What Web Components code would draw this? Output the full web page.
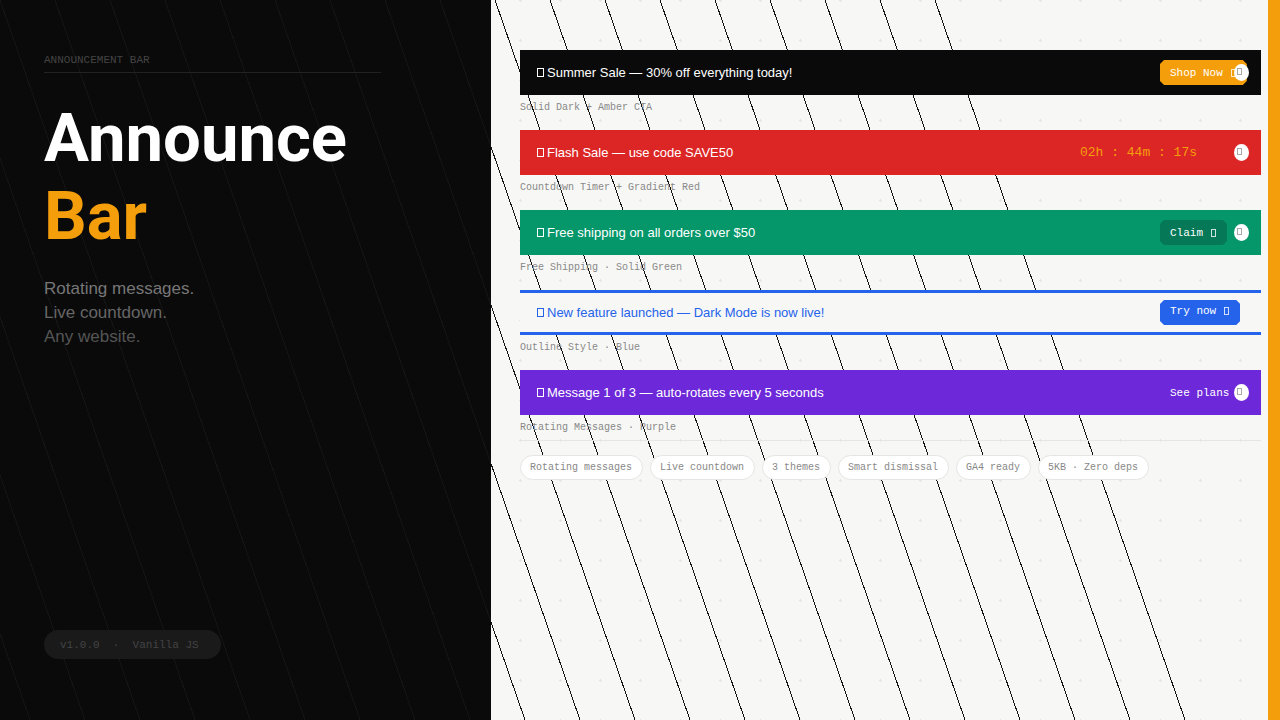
<!DOCTYPE html>
<html lang="en">
<head>
<meta charset="utf-8">
<title>Announce Bar</title>
<style>
  html, body { margin: 0; }
  body { font-family: "Liberation Sans", Arial, sans-serif; background: #f7f7f5; }
</style>
</head>
<body>
<showcase-page>
  <hero-panel slot="hero">
    <span slot="eyebrow">ANNOUNCEMENT BAR</span>
    <span slot="title">Announce</span>
    <span slot="accent">Bar</span>
    <span slot="line-1">Rotating messages.</span>
    <span slot="line-2">Live countdown.</span>
    <span slot="line-3">Any website.</span>
    <span slot="version">v1.0.0&nbsp; ·&nbsp; Vanilla JS</span>
  </hero-panel>
  <demo-panel slot="demos">
    <bar-demo>
      <announce-bar theme="dark" closable>Summer Sale — 30% off everything today!<cta-button slot="action" arrow>Shop Now</cta-button></announce-bar>
      <span slot="caption">Solid Dark + Amber CTA</span>
    </bar-demo>
    <bar-demo>
      <announce-bar theme="red" closable>Flash Sale — use code SAVE50<count-down slot="action">02h : 44m : 17s</count-down></announce-bar>
      <span slot="caption">Countdown Timer + Gradient Red</span>
    </bar-demo>
    <bar-demo>
      <announce-bar theme="green" closable>Free shipping on all orders over $50<cta-button slot="action" arrow>Claim</cta-button></announce-bar>
      <span slot="caption">Free Shipping · Solid Green</span>
    </bar-demo>
    <bar-demo>
      <announce-bar theme="outline">New feature launched — Dark Mode is now live!<cta-button slot="action" arrow>Try now</cta-button></announce-bar>
      <span slot="caption">Outline Style · Blue</span>
    </bar-demo>
    <bar-demo>
      <announce-bar theme="purple" closable>Message 1 of 3 — auto-rotates every 5 seconds<cta-button slot="action">See plans</cta-button></announce-bar>
      <span slot="caption">Rotating Messages · Purple</span>
    </bar-demo>
    <feature-chip slot="features">Rotating messages</feature-chip>
    <feature-chip slot="features">Live countdown</feature-chip>
    <feature-chip slot="features">3 themes</feature-chip>
    <feature-chip slot="features">Smart dismissal</feature-chip>
    <feature-chip slot="features">GA4 ready</feature-chip>
    <feature-chip slot="features">5KB · Zero deps</feature-chip>
  </demo-panel>
</showcase-page>

<script>
const define = (name, html, setup) => {
  const template = document.createElement('template');
  template.innerHTML = html;
  customElements.define(name, class extends HTMLElement {
    constructor() {
      super();
      this.attachShadow({ mode: 'open' }).append(template.content.cloneNode(true));
    }
    connectedCallback() { if (setup) setup(this, this.shadowRoot); }
  });
};

// Two panels and an accent stripe, with slanted hairlines across the panels.
define('showcase-page', `
  <style>
    :host { display: grid; grid-template-columns: minmax(0, 491fr) minmax(0, 777fr) 12px; min-height: 100vh; position: relative; overflow: hidden; }
    .lines { position: absolute; inset: 0; width: 100%; height: 100%; pointer-events: none; }
    .stripe { background: #f59e0b; }
  </style>
  <slot name="hero"></slot>
  <slot name="demos"></slot>
  <div class="stripe"></div>
  <svg class="lines" viewBox="0 0 1280 720" preserveAspectRatio="xMinYMin slice" aria-hidden="true">
    <path fill="none" stroke="#141414" stroke-width="1" shape-rendering="crispEdges"/>
  </svg>`, (host, root) => {
  let d = '';
  for (let x = -220; x <= 935; x += 55) d += `M${x} 0L${x + 250} 720`;
  root.querySelector('path').setAttribute('d', d);
});

define('hero-panel', `
  <style>
    :host { display: block; background: #0a0a0a; }
    .body { position: relative; z-index: 1; box-sizing: border-box; height: 100%; display: flex; flex-direction: column; align-items: flex-start; padding: 51px 110px 61px 44px; }
    .eyebrow { align-self: stretch; font: 11px/18px "Liberation Mono", monospace; color: #444; padding-bottom: 3px; border-bottom: 1px solid #222; }
    h1 { margin: 26px 0 0; font: bold 67px/78px "Roboto", sans-serif; color: #fff; }
    h1 slot { display: block; }
    .accent { color: #f59e0b; }
    p { margin: 22px 0 0; font-size: 17px; line-height: 24px; color: #777; }
    p slot { display: block; }
    .second { color: #666; }
    .third { color: #555; }
    .version { margin-top: auto; padding: 1px 22px 0 16px; border-radius: 15px; background: #1a1a1a; color: #444; font: 11px/28px "Liberation Mono", monospace; white-space: nowrap; }
  </style>
  <div class="body">
    <div class="eyebrow"><slot name="eyebrow"></slot></div>
    <h1><slot name="title"></slot><slot class="accent" name="accent"></slot></h1>
    <p><slot name="line-1"></slot><slot class="second" name="line-2"></slot><slot class="third" name="line-3"></slot></p>
    <div class="version"><slot name="version"></slot></div>
  </div>`);

define('demo-panel', `
  <style>
    :host { display: block; position: relative; background: #f7f7f5; }
    .grid { position: absolute; inset: 0; width: 100%; height: 100%; }
    .body { position: relative; z-index: 1; padding: 50px 7px 50px 29px; }
    .features { display: flex; flex-wrap: wrap; gap: 7px; padding-top: 14px; border-top: 1px solid #e5e5e3; }
  </style>
  <svg class="grid" aria-hidden="true">
    <pattern id="plus" x="28" y="-1" width="40" height="40" patternUnits="userSpaceOnUse">
      <path fill="#e4e4e2" d="M1 0h1v1h1v1h-1v1h-1v-1h-1v-1h1z"/>
    </pattern>
    <rect width="100%" height="100%" fill="url(#plus)"/>
  </svg>
  <div class="body">
    <slot></slot>
    <div class="features"><slot name="features"></slot></div>
  </div>`);

define('bar-demo', `
  <style>
    :host { display: block; padding-bottom: 15px; }
    :host(:last-of-type) { padding-bottom: 5px; }
    .caption { padding-top: 6px; font: 10px/14px "Liberation Mono", monospace; color: #888; }
  </style>
  <slot></slot>
  <div class="caption"><slot name="caption"></slot></div>`);

define('announce-bar', `
  <style>
    :host { position: relative; display: flex; align-items: center; justify-content: space-between; box-sizing: border-box; height: 45px; padding-left: 17px; color: #fff; }
    :host([theme="dark"]) { background: #0a0a0a; --cta: #f59e0b; }
    :host([theme="red"]) { background: #dc2626; --action: 181px; }
    :host([theme="green"]) { background: #059669; --cta: #047857; }
    :host([theme="purple"]) { background: #6d28d9; --cta: #6d28d9; }
    :host([theme="outline"]) { background: #f7f7f5; color: #2563eb; border: solid #2563eb; border-width: 3px 0; --cta: #2563eb; --lift: 4px; }
    .message { display: flex; align-items: center; gap: 3px; font-size: 13px; line-height: 20px; white-space: nowrap; }
    .glyph { box-sizing: border-box; width: 7px; height: 9px; border: 1px solid; }
    .action { flex: 0 0 var(--action, 101px); display: flex; }
    .close { display: none; position: absolute; right: 12px; top: 14px; width: 15px; height: 17px; padding: 0 0 2px 3px; border: 0; border-radius: 50%; background: #fff; color: #aaa; }
    .close::before { content: ""; display: block; box-sizing: border-box; width: 5px; height: 7px; border: 1px solid; }
    :host([closable]) .close { display: block; }
  </style>
  <div class="message"><span class="glyph"></span><span><slot></slot></span></div>
  <div class="action"><slot name="action"></slot></div>
  <button class="close" type="button" aria-label="Dismiss"></button>`);

define('cta-button', `
  <style>
    :host { display: block; }
    button { display: flex; align-items: center; gap: 8px; box-sizing: border-box; height: 25px; padding: 0 11px var(--lift, 0px) 10px; border: 0; background: var(--cta); color: #fff; font: 11px/14px "Liberation Mono", monospace; white-space: nowrap;
      clip-path: polygon(4px 0, calc(100% - 4px) 0, 100% 4px, 100% calc(100% - 4px), calc(100% - 4px) 100%, 4px 100%, 0 calc(100% - 4px), 0 4px); }
    i { display: none; box-sizing: border-box; width: 5px; height: 8px; border: 1px solid; opacity: .8; }
    :host([arrow]) i { display: block; }
  </style>
  <button type="button"><slot></slot><i></i></button>`);

define('count-down', `
  <style>:host { display: block; color: #f59e0b; font: 13px/20px "Liberation Mono", monospace; white-space: nowrap; }</style>
  <slot></slot>`);

define('feature-chip', `
  <style>:host { display: block; box-sizing: border-box; padding: 1px 10px 0 9px; border: 1px solid #e5e5e3; border-radius: 13px; background: #fff; color: #888; font: 10px/22px "Liberation Mono", monospace; white-space: nowrap; }</style>
  <slot></slot>`);
</script>
</body>
</html>
